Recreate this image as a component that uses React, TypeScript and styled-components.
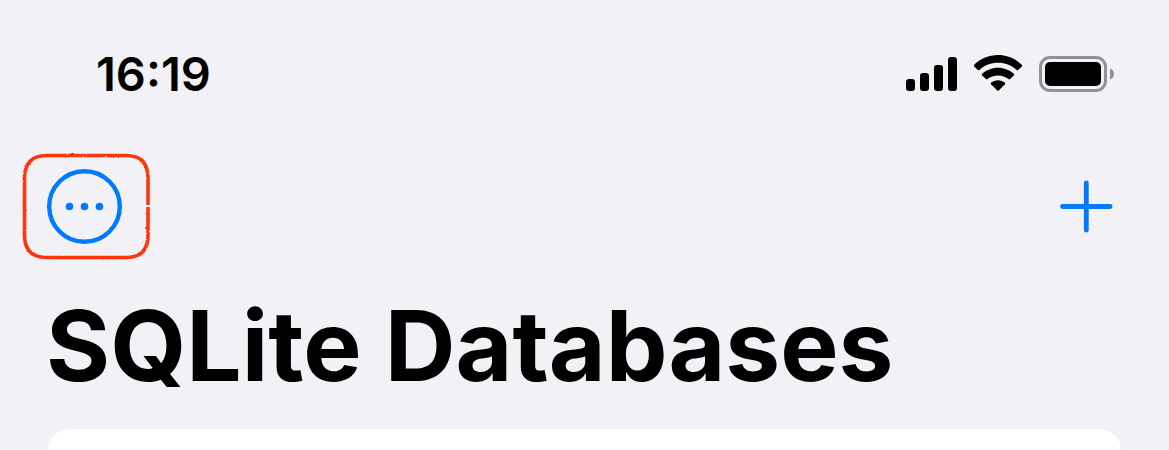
import React from "react";
import styled, { createGlobalStyle } from "styled-components";

const GlobalStyle = createGlobalStyle`
  * { box-sizing: border-box; }
  body {
    margin: 0;
    background: #f2f1f6;
    color: #000;
    font-family: Inter, "Liberation Sans", sans-serif;
  }
`;

const Screen = styled.div`
  display: flex;
  flex-direction: column;
  min-height: 100vh;
  padding-top: 46px;
`;

const StatusBar = styled.header`
  display: flex;
  align-items: center;
  justify-content: space-between;
  padding: 0 54px 0 96px;
`;

const Clock = styled.time`
  font-size: 47px;
  line-height: 56px;
  font-weight: 600;
`;

const StatusIcons = styled.div`
  display: flex;
  align-items: center;
  gap: 16px;
`;

const Icon = styled.svg`
  display: block;
  flex: none;
  overflow: visible;
`;

const Toolbar = styled.nav`
  display: flex;
  align-items: center;
  justify-content: space-between;
  margin-top: 51px;
  padding: 0 56px 0 22px;
`;

const IconButton = styled.button`
  display: block;
  padding: 0;
  border: 0;
  background: none;
  color: #007aff;
  cursor: pointer;
`;

const Title = styled.h1`
  margin: 26px 46px 23px;
  font-size: 98px;
  line-height: 120px;
  font-weight: 700;
`;

const DatabaseList = styled.main`
  flex: 1;
  margin: 0 48px;
  border-radius: 30px 30px 0 0;
  background: #fff;
`;

function SignalIcon() {
  return (
    <Icon width="52" height="36" viewBox="0 0 52 36" aria-hidden="true">
      <rect x="0" y="23" width="9" height="12" rx="3" />
      <rect x="14" y="17" width="9" height="18" rx="3" />
      <rect x="28" y="9" width="9" height="26" rx="3" />
      <rect x="42" y="1" width="9" height="34" rx="3" />
    </Icon>
  );
}

function WifiIcon() {
  return (
    <Icon width="49" height="36" viewBox="0 0 49 36" aria-hidden="true">
      <path d="M24 -1C33 -1 41.5 2.5 47.8 8.8Q48.500 9.6 47.8 10.4L44.2 14Q43.4 14.700 42.6 14C37.400 9.300 31 6.800 24 6.800S10.6 9.300 5.400 14Q4.600 14.700 3.800 14L0.2 10.4Q-0.500 9.6 0.2 8.800C6.500 2.5 15 -1 24 -1Z" />
      <path d="M24 11.700C30.1 11.700 35.700 14 39.9 17.8Q40.700 18.600 39.9 19.400L36 23.1Q35.200 23.800 34.4 23.1C31.6 20.700 28 19.400 24 19.400S16.4 20.700 13.6 23.1Q12.800 23.800 12 23.1L8.1 19.400Q7.300 18.600 8.1 17.8C12.300 14 17.900 11.700 24 11.700Z" />
      <path d="M24 24.200C26.600 24.200 29 25.100 30.8 26.6Q31.600 27.400 30.9 28.200L24.7 34.4Q24 35.1 23.3 34.4L17.1 28.200Q16.400 27.400 17.2 26.6C19 25.100 21.400 24.200 24 24.200Z" />
    </Icon>
  );
}

function BatteryIcon() {
  return (
    <Icon width="76" height="36" viewBox="0 0 76 36" aria-hidden="true">
      <rect x="1.5" y="1.5" width="65" height="33" rx="9.5" fill="none" stroke="#929196" strokeWidth="3" />
      <rect x="6" y="6" width="56" height="24" rx="5" />
      <path d="M71 12.5C73.4 13.2 75 15.3 75 18S73.4 22.8 71 23.5Z" fill="#929196" />
    </Icon>
  );
}

function MoreIcon() {
  return (
    <Icon width="128" height="107" viewBox="0 0 128 107" aria-hidden="true">
      <defs>
        <filter id="crayon" x="-5%" y="-5%" width="110%" height="110%">
          <feTurbulence type="fractalNoise" baseFrequency="0.3" numOctaves="2" seed="4" result="grain" />
          <feDisplacementMap in="SourceGraphic" in2="grain" scale="2" xChannelSelector="R" yChannelSelector="G" />
          <feGaussianBlur stdDeviation="0.4" />
        </filter>
      </defs>
      <path
        d="M126 52V25Q126 2.500 104 2.500H25Q2.500 2.500 2.500 25V82Q2.500 104.500 25 104.500H104Q126 104.500 126 82V54"
        fill="none"
        stroke="#ff3511"
        strokeWidth="3.600"
        filter="url(#crayon)"
      />
      <circle cx="62.500" cy="53.500" r="35.300" fill="none" stroke="currentColor" strokeWidth="4.400" />
      <g fill="currentColor">
        <circle cx="47.500" cy="53.500" r="3.800" />
        <circle cx="62.500" cy="53.500" r="3.800" />
        <circle cx="77.500" cy="53.500" r="3.800" />
      </g>
    </Icon>
  );
}

function PlusIcon() {
  return (
    <Icon width="53" height="53" viewBox="0 0 53 53" aria-hidden="true">
      <path d="M26.300 2.800V50.200M2.500 26.500H50.100" fill="none" stroke="currentColor" strokeWidth="4.800" strokeLinecap="round" />
    </Icon>
  );
}

export default function App() {
  return (
    <>
      <GlobalStyle />
      <Screen>
        <StatusBar>
          <Clock>16:19</Clock>
          <StatusIcons>
            <SignalIcon />
            <WifiIcon />
            <BatteryIcon />
          </StatusIcons>
        </StatusBar>
        <Toolbar>
          <IconButton type="button" aria-label="More options">
            <MoreIcon />
          </IconButton>
          <IconButton type="button" aria-label="Add database">
            <PlusIcon />
          </IconButton>
        </Toolbar>
        <Title>SQLite Databases</Title>
        <DatabaseList aria-label="Databases" />
      </Screen>
    </>
  );
}
